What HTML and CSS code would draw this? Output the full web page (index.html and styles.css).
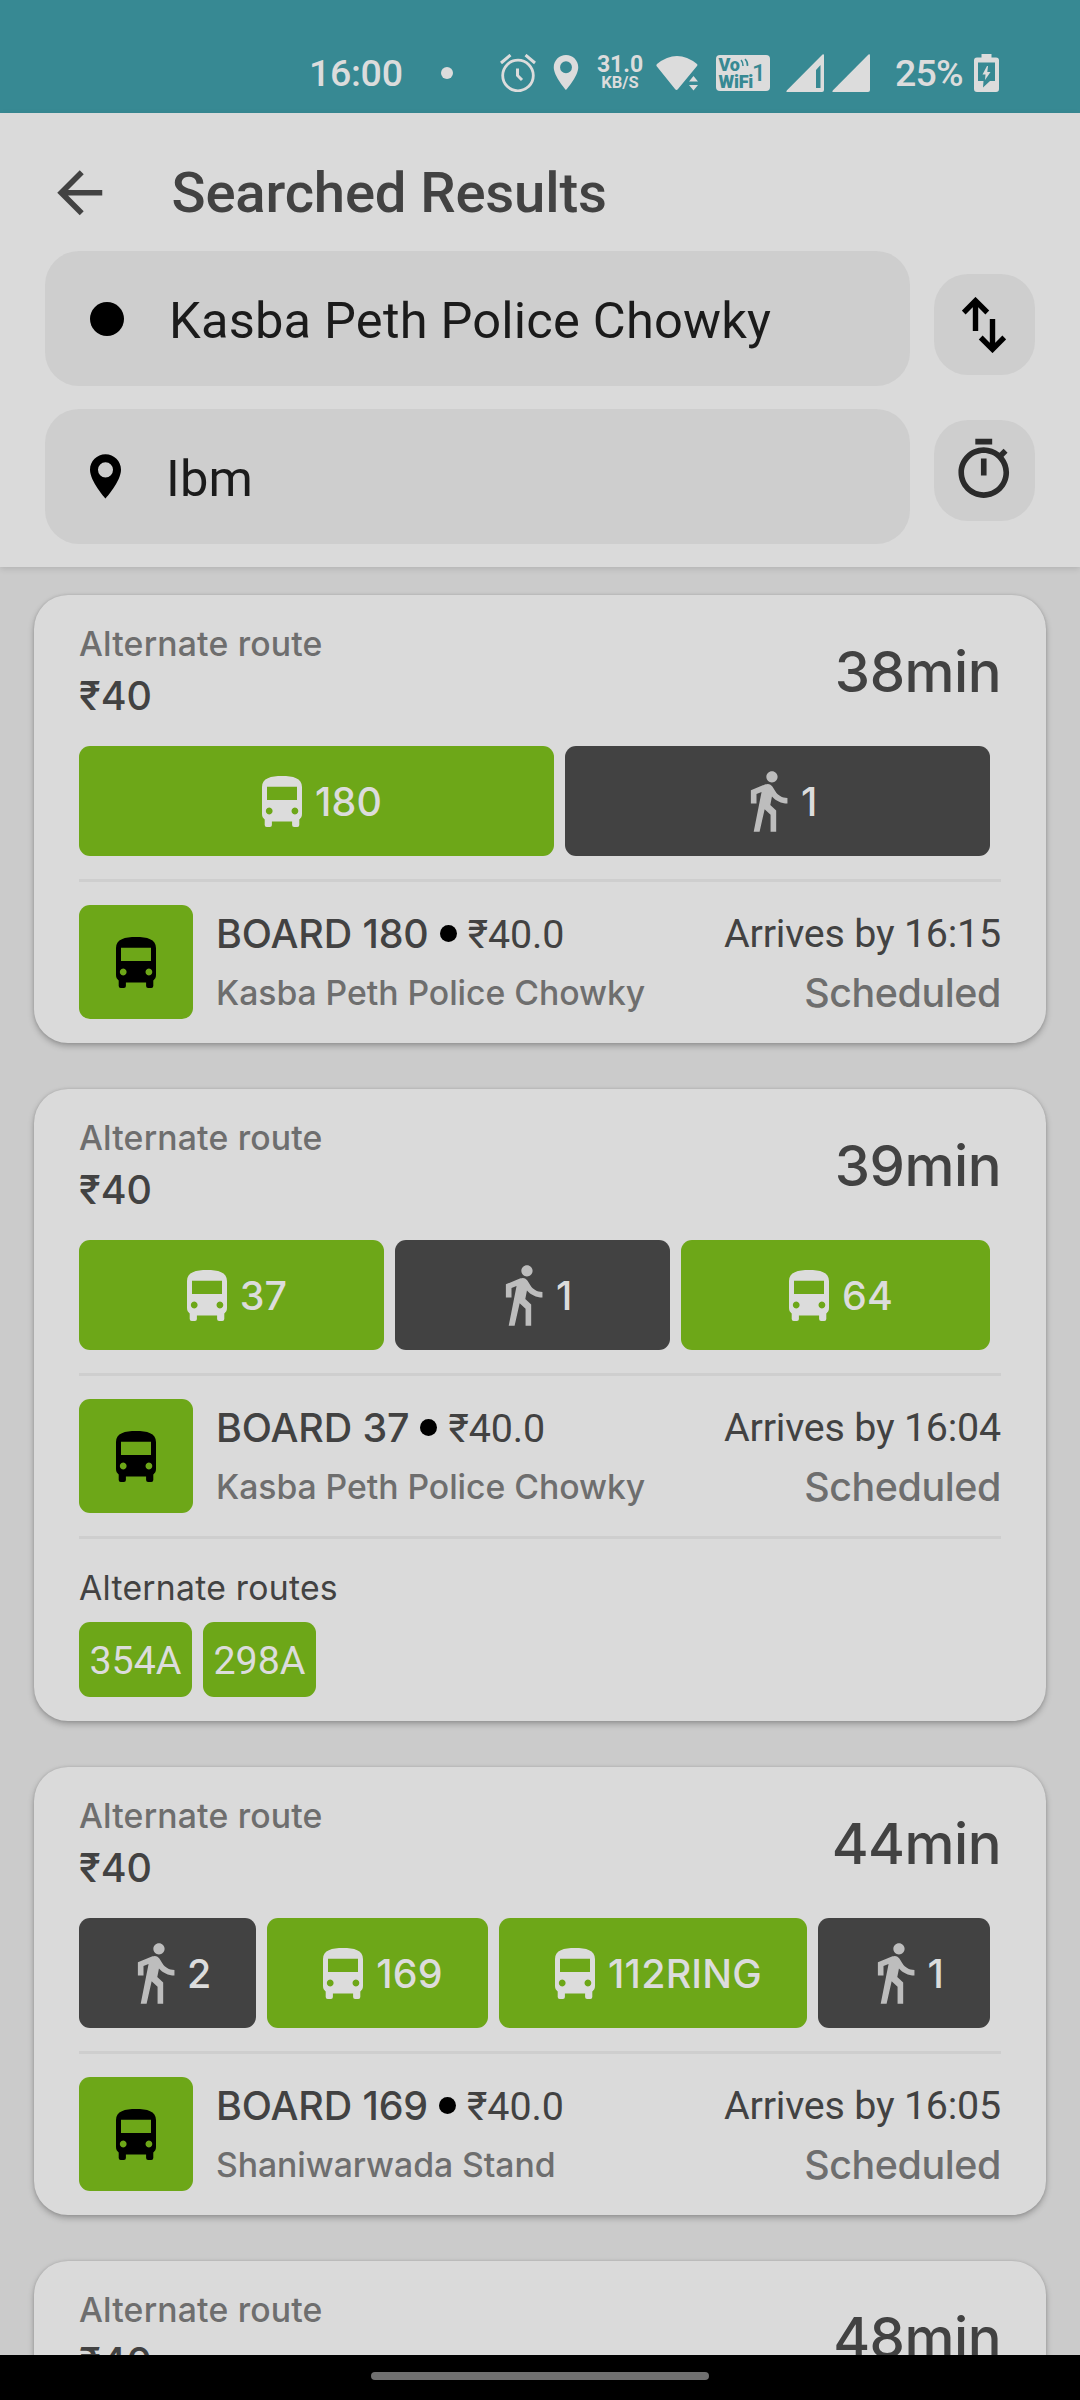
FILE: index.html
```html
<!DOCTYPE html>
<html lang="en">
<head>
<meta charset="utf-8">
<title>Searched Results</title>
<link rel="stylesheet" href="styles.css">
</head>
<body>
<svg class="sprite" aria-hidden="true">
  <symbol id="bus" viewBox="0 0 40 51">
    <path fill-rule="evenodd" d="M0 11C0 2 9 0 20 0s20 2 20 11v27c0 2.500-1 4-2.700 5.500V49q0 2-2 2h-3.200q-2 0-2-2v-3.500H9.900V49q0 2-2 2H4.700q-2 0-2-2v-5.500C1 42 0 40.500 0 38ZM5 10.700V24h30V10.700ZM7.200 31.600a3.400 3.400 0 1 0 .01 0ZM32.900 31.600a3.400 3.400 0 1 0 .01 0Z"/>
  </symbol>
  <symbol id="walk" viewBox="0 0 24 24">
    <path d="M13.500 5.500c1.100 0 2-.9 2-2s-.9-2-2-2-2 .9-2 2 .9 2 2 2zM9.800 8.900L7 23h2.100l1.800-8 2.100 2v6h2v-7.500l-2.100-2 .6-3C14.800 12 16.800 13 19 13v-2c-1.900 0-3.500-1-4.300-2.400l-1-1.600c-.4-.6-1-1-1.700-1-.3 0-.5.1-.8.1L6 8.300V13h2V9.600l1.800-.7"/>
  </symbol>
  <symbol id="pin" viewBox="5 2 14 20">
    <path fill-rule="evenodd" d="M12 2C8.130 2 5 5.130 5 9c0 5.250 7 13 7 13s7-7.750 7-13c0-3.870-3.130-7-7-7zm0 3.600a3.400 3.400 0 1 1 0 6.800 3.400 3.400 0 0 1 0-6.800z"/>
  </symbol>
</svg>

<div class="status">
  <span class="clock">16:00</span>
  <span class="notif-dot"></span>
  <svg class="alarm" viewBox="0 0 36 38" fill="none" stroke="currentColor"><circle cx="18" cy="21.500" r="15.300" stroke-width="2.800"/><path stroke-width="3" d="M17.500 14.500v7l4.500 4.500M1 9L10.500 1M35 9L25.500 1"/></svg>
  <svg class="loc"><use href="#pin"/></svg>
  <span class="speed"><b>31.0</b><i>KB/S</i></span>
  <svg class="wifi" viewBox="0 0 42 36"><path d="M1 9Q21-7 41 9q1 1 0 2L22 34q-1.500 2-3 0L.500 11Q0 10 1 9Z"/><path class="knock" d="M31 28.500L37.500 19l6.500 9.500V40H31Z"/><path d="M33 26.500l4.500-5.500 4.500 5.500zM33 30h9l-4.500 5.500z"/></svg>
  <span class="vowifi"><span class="vw-text"><span>Vo</span><span>WiFi</span></span><span class="vw-one">1</span>
    <svg class="vw-waves" viewBox="0 0 9 9" fill="none" stroke="currentColor" stroke-width="1.600"><path d="M1 2q2 2 2 6M5 1q3 3 2.500 7"/></svg></span>
  <svg class="signal one" viewBox="0 0 38 38"><path fill-rule="evenodd" d="M36.500.500Q38-.5 38 1.500V36q0 2-2 2H1.500Q-.500 38 1 36.300ZM34.500 11L30 16V34h4.500Z"/></svg>
  <svg class="signal two" viewBox="0 0 38 38"><path d="M36.500.500Q38-.5 38 1.500V36q0 2-2 2H1.500Q-.500 38 1 36.300Z"/></svg>
  <span class="percent">25%</span>
  <svg class="battery" viewBox="0 0 25 38"><path fill-rule="evenodd" d="M7.500 0h10v3.500H22q3 0 3 3V35q0 3-3 3H3q-3 0-3-3V6.500q0-3 3-3h4.500ZM4 8.500V27h5.500l-.5 6.500L16 27h5V8.500Z"/><path d="M13 12l-4.500 8.500h3L11 26l5.500-8h-3.200l.7-6Z"/></svg>
</div>

<header class="header">
  <div class="titlebar">
    <svg class="back" viewBox="0 0 24 24"><path d="M20 11H7.830l5.590-5.590L12 4l-8 8 8 8 1.410-1.410L7.830 13H20v-2z"/></svg>
    <h1>Searched Results</h1>
  </div>
  <div class="search">
    <div class="fields">
      <div class="field"><span class="origin"></span><span class="from">Kasba Peth Police Chowky</span></div>
      <div class="field"><svg class="dest"><use href="#pin"/></svg><span class="to">Ibm</span></div>
    </div>
    <div class="actions">
      <button class="action"><svg class="swap" viewBox="0 0 44 56" fill="none" stroke="currentColor" stroke-width="5.400"><path d="M13.500 34V4M1.700 15.500L13.500 3.700l11.800 11.800M30.500 22v30M18.700 40.500l11.800 11.800 11.800-11.800"/></svg></button>
      <button class="action"><svg class="timer" viewBox="0 0 24 24"><path d="M15 1H9v2h6V1zm-4 13h2V8h-2v6zm8.030-6.610l1.420-1.420c-.43-.51-.9-.99-1.410-1.410l-1.420 1.420C16.070 4.740 14.120 4 12 4c-4.970 0-9 4.030-9 9s4.020 9 9 9 9-4.030 9-9c0-2.120-.74-4.070-1.970-5.610zM12 20c-3.870 0-7-3.130-7-7s3.130-7 7-7 7 3.130 7 7-3.130 7-7 7z"/></svg></button>
    </div>
  </div>
</header>

<main class="list">
  <article class="card">
    <div class="summary"><div><div class="label">Alternate route</div><div class="fare">₹40</div></div><div class="duration">38min</div></div>
    <div class="legs">
      <div class="leg" style="flex-grow:475"><svg class="bus"><use href="#bus"/></svg><span>180</span></div>
      <div class="leg foot" style="flex-grow:425"><svg class="walk"><use href="#walk"/></svg><span>1</span></div>
    </div>
    <div class="board">
      <div class="tile"><svg class="bus"><use href="#bus"/></svg></div>
      <div class="stop"><div class="line">BOARD 180<span class="dot"></span><span class="price">₹40.0</span></div><div class="place">Kasba Peth Police Chowky</div></div>
      <div class="eta"><div class="arrives">Arrives by 16:15</div><div class="state">Scheduled</div></div>
    </div>
  </article>

  <article class="card">
    <div class="summary"><div><div class="label">Alternate route</div><div class="fare">₹40</div></div><div class="duration">39min</div></div>
    <div class="legs">
      <div class="leg" style="flex-grow:305"><svg class="bus"><use href="#bus"/></svg><span>37</span></div>
      <div class="leg foot" style="flex-grow:275"><svg class="walk"><use href="#walk"/></svg><span>1</span></div>
      <div class="leg" style="flex-grow:309"><svg class="bus"><use href="#bus"/></svg><span>64</span></div>
    </div>
    <div class="board">
      <div class="tile"><svg class="bus"><use href="#bus"/></svg></div>
      <div class="stop"><div class="line">BOARD 37<span class="dot"></span><span class="price">₹40.0</span></div><div class="place">Kasba Peth Police Chowky</div></div>
      <div class="eta"><div class="arrives">Arrives by 16:04</div><div class="state">Scheduled</div></div>
    </div>
    <div class="others">
      <div class="others-label">Alternate routes</div>
      <div class="chips"><span class="chip">354A</span><span class="chip">298A</span></div>
    </div>
  </article>

  <article class="card">
    <div class="summary"><div><div class="label">Alternate route</div><div class="fare">₹40</div></div><div class="duration">44min</div></div>
    <div class="legs">
      <div class="leg foot" style="flex-grow:177"><svg class="walk"><use href="#walk"/></svg><span>2</span></div>
      <div class="leg" style="flex-grow:221"><svg class="bus"><use href="#bus"/></svg><span>169</span></div>
      <div class="leg" style="flex-grow:308"><svg class="bus"><use href="#bus"/></svg><span>112RING</span></div>
      <div class="leg foot" style="flex-grow:172"><svg class="walk"><use href="#walk"/></svg><span>1</span></div>
    </div>
    <div class="board">
      <div class="tile"><svg class="bus"><use href="#bus"/></svg></div>
      <div class="stop"><div class="line">BOARD 169<span class="dot"></span><span class="price">₹40.0</span></div><div class="place">Shaniwarwada Stand</div></div>
      <div class="eta"><div class="arrives">Arrives by 16:05</div><div class="state">Scheduled</div></div>
    </div>
  </article>

  <article class="card">
    <div class="summary"><div><div class="label">Alternate route</div><div class="fare">₹40</div></div><div class="duration">48min</div></div>
    <div class="legs"></div>
  </article>
</main>

<div class="navbar"><span class="handle"></span></div>
</body>
</html>
```
FILE: styles.css
```css
* { box-sizing: border-box; }

body {
  margin: 0;
  width: 1080px;
  height: 2400px;
  overflow: hidden;
  display: flex;
  flex-direction: column;
  background: #cbcbcb;
  color: #424242;
  font-family: Inter, "Noto Sans", sans-serif;
  font-weight: 500;
}

svg { display: block; flex: none; fill: currentColor; }
svg[fill="none"] { fill: none; }
.sprite { display: none; }

/* Status bar */
.status {
  flex: none;
  height: 113px;
  padding: 32px 0 0 309px;
  display: flex;
  align-items: center;
  background: #378993;
  color: #dcdcdc;
  font-family: Roboto, sans-serif;
}
.clock, .percent { width: 92px; font-size: 37.500px; line-height: 40px; white-space: nowrap; letter-spacing: -.3px; }
.percent { width: 67px; margin-left: 25px; letter-spacing: -.8px; }
.notif-dot { width: 12px; height: 12px; margin-left: 40px; border-radius: 50%; background: currentColor; }
.alarm { width: 36px; height: 38px; margin-left: 47px; }
.loc { width: 28px; height: 35px; margin-left: 16px; }
.speed { width: 44px; margin-left: 18px; display: flex; flex-direction: column; align-items: center; }
.speed b { font-size: 23px; line-height: 20px; font-weight: 700; }
.speed i { font-size: 16.500px; line-height: 16px; font-style: normal; font-weight: 700; }
.wifi { width: 42px; height: 36px; margin-left: 14px; overflow: visible; }
.knock { fill: #378993; }
.vowifi {
  position: relative;
  width: 54px;
  height: 36px;
  margin-left: 17.500px;
  padding: 1px 4px 0 3px;
  display: flex;
  justify-content: space-between;
  align-items: center;
  border-radius: 4px;
  background: #dcdcdc;
  color: #378993;
}
.vw-text { display: flex; flex-direction: column; font-size: 18px; line-height: 17px; font-weight: 900; letter-spacing: -.2px; }
.vw-one { font-size: 24px; line-height: 32px; font-weight: 500; margin-left: -1px; }
.vw-waves { position: absolute; left: 24px; top: 3px; width: 9px; height: 9px; }
.signal { width: 38px; height: 38px; }
.signal.one { margin-left: 16.500px; }
.signal.two { margin-left: 8px; }
.battery { width: 25px; height: 38px; margin-left: 12px; }

/* Header */
.header {
  flex: none;
  height: 454px;
  padding: 23px 45px 0;
  background: #dadada;
  box-shadow: 0 2px 6px rgba(0, 0, 0, .12);
}
.titlebar { display: flex; align-items: center; height: 115px; padding-bottom: 1px; }
.back { width: 67.500px; height: 67.500px; margin-left: 1px; }
h1 { margin: 0 0 0 58px; font: 500 56.250px/66px Roboto, sans-serif; letter-spacing: -.18px; white-space: nowrap; }
.search { display: flex; justify-content: space-between; }
.fields { width: 865px; display: flex; flex-direction: column; gap: 23px; }
.field {
  height: 135px;
  padding-left: 45px;
  display: flex;
  align-items: center;
  border-radius: 34px;
  background: #cecece;
  color: #1b1b1b;
  font: 400 50.600px/60px Roboto, sans-serif;
  letter-spacing: .2px;
}
.origin { width: 34px; height: 34px; border-radius: 50%; background: #000; }
.from { margin: 4px 0 0 45px; }
.dest { width: 31px; height: 45px; color: #000; }
.to { margin: 4px 0 0 45px; }
.actions { display: flex; flex-direction: column; gap: 45px; padding-top: 23px; }
.action {
  width: 101px;
  height: 101px;
  padding: 0;
  border: 0;
  border-radius: 34px;
  background: #cecece;
  display: flex;
  justify-content: center;
  align-items: center;
}
.swap { width: 44px; height: 56px; margin-right: 2px; color: #000; }
.timer { width: 67.500px; height: 67.500px; margin: 0 2px 2px 0; color: #2b2b2b; }

/* Result cards */
.list {
  flex: 1;
  min-height: 0;
  overflow: hidden;
  padding: 28px 34px 0;
  display: flex;
  flex-direction: column;
  gap: 46px;
}
.header { position: relative; }
.card {
  flex: none;
  padding: 23px 45px 24px;
  border-radius: 34px;
  background: #dadada;
  box-shadow: 0 3px 6px rgba(0, 0, 0, .26), 0 0 3px rgba(0, 0, 0, .12);
}
.summary { display: flex; justify-content: space-between; height: 128px; }
.label { font-size: 33.750px; line-height: 42px; padding-top: 5px; color: #6e6e6e; letter-spacing: .18px; }
.fare { font-size: 39.400px; line-height: 48px; margin-top: 7px; }
.duration { font-size: 56.250px; line-height: 68px; padding-top: 20px; letter-spacing: -.5px; }

.legs { display: flex; gap: 11px; height: 110px; width: 911px; }
.leg {
  flex: 1 1 0;
  min-width: 0;
  display: flex;
  justify-content: center;
  align-items: center;
  border-radius: 11px;
  background: #6da718;
  color: #dcdcdc;
  font-size: 39.400px;
  letter-spacing: .2px;
  white-space: nowrap;
}
.leg span { padding-top: 2px; }
.leg.foot { background: #424242; }
.leg .bus { width: 40px; height: 51px; margin: 0 13px 0 11px; }
.leg .walk { width: 67.500px; height: 67.500px; color: #bdbdbd; margin: 0 -1px 0 -3px; }

.board {
  display: flex;
  height: 140px;
  margin-top: 23px;
  padding-top: 23px;
  border-top: 3px solid #cecece;
}
.tile {
  flex: none;
  width: 114px;
  height: 114px;
  display: flex;
  justify-content: center;
  align-items: center;
  border-radius: 11px;
  background: #6da718;
  color: #000;
}
.tile .bus { width: 40px; height: 51px; }
.stop { flex: 1; margin-left: 23px; }
.line { display: flex; align-items: center; height: 58px; font-size: 39.400px; letter-spacing: -.1px; white-space: nowrap; }
.dot { width: 17px; height: 17px; margin: 0 11px 2px 11px; border-radius: 50%; background: #000; }
.price { font-family: Roboto, sans-serif; font-weight: 400; }
.place { font-size: 33.750px; line-height: 60px; color: #6e6e6e; letter-spacing: -.05px; white-space: nowrap; }
.eta { text-align: right; white-space: nowrap; font-size: 39.400px; }
.arrives { font-family: Roboto, sans-serif; font-weight: 400; line-height: 58px; letter-spacing: -.2px; }
.state { line-height: 60px; color: #6e6e6e; letter-spacing: -.4px; }

.others { margin-top: 23px; padding-top: 28px; border-top: 3px solid #cecece; }
.others-label { font-size: 33.750px; line-height: 42px; font-weight: 400; letter-spacing: .25px; }
.chips { display: flex; gap: 11px; margin-top: 13px; }
.chip {
  width: 113px;
  height: 75px;
  padding-top: 3px;
  display: flex;
  justify-content: center;
  align-items: center;
  border-radius: 11px;
  background: #6da718;
  color: #dcdcdc;
  font: 400 39.400px/48px Roboto, sans-serif;
}

/* Gesture bar */
.navbar { position: relative; flex: none; height: 45px; padding-top: 17px; background: #000; }
.handle { display: block; width: 338px; height: 8px; margin: 0 auto; border-radius: 4px; background: #707070; }
```
